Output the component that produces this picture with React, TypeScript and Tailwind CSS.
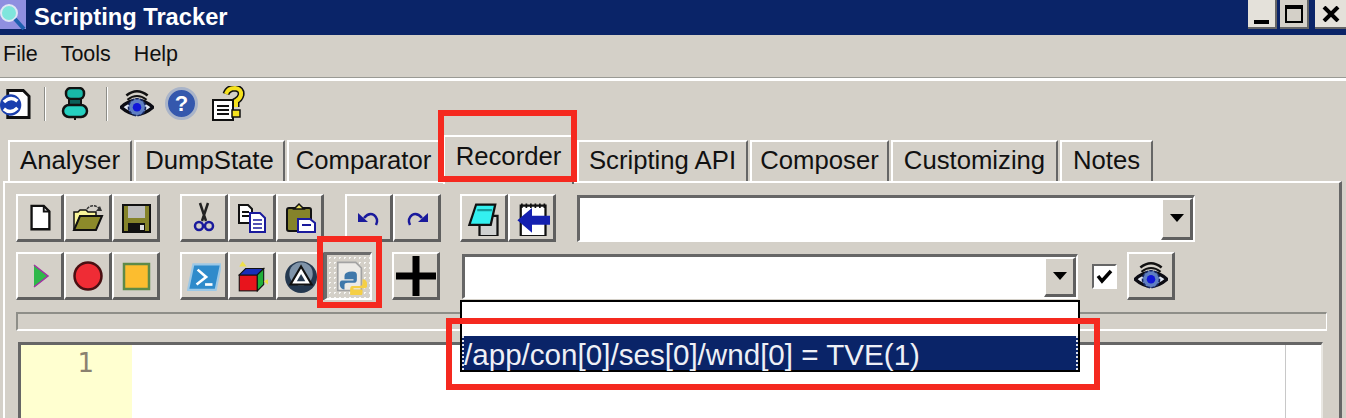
// Scripting Tracker window, recorder tab with the red callouts on top
import React from 'react';

const TABS = [
  { label: 'Analyser', w: 'w-[124px]' },
  { label: 'DumpState', w: 'w-[151px]' },
  { label: 'Comparator', w: 'w-[153px]' },
  { label: 'Recorder', w: 'w-[131px]', active: true },
  { label: 'Scripting API', w: 'w-[171px]' },
  { label: 'Composer', w: 'w-[139px]' },
  { label: 'Customizing', w: 'w-[167px]' },
  { label: 'Notes', w: 'w-[93px]' },
];

const Btn = ({ children, pressed }: { children: React.ReactNode; pressed?: boolean }) => (
  <div
    className={
      pressed
        ? 'w-[48px] h-[48px] flex items-center justify-center border-t-[3px] border-l-[3px] border-b-2 border-r-2 border-t-[#6b6b6b] border-l-[#6b6b6b] border-b-white border-r-white bg-[radial-gradient(#f8f8f6_1px,#d4d0c8_1px)] bg-[length:5px_5px]'
        : 'w-[48px] h-[48px] flex items-center justify-center border-t-2 border-l-2 border-b-[3px] border-r-[3px] border-t-white border-l-white border-b-[#5f5f5f] border-r-[#5f5f5f]'
    }
  >
    {children}
  </div>
);

const Svg = ({ children, size = 32 }: { children: React.ReactNode; size?: number }) => (
  <svg width={size} height={size} viewBox="0 0 32 32">
    {children}
  </svg>
);

const EyeIcon = ({ size = 34 }: { size?: number }) => (
  <Svg size={size}>
    <path d="M6 8 Q16 0 26 8" fill="none" stroke="#111" strokeWidth="2.5" />
    <path d="M7 12 Q16 5 25 12" fill="none" stroke="#111" strokeWidth="2" />
    <path d="M1 19 Q16 6 31 19 Q16 32 1 19Z" fill="#dfe6f2" stroke="#0c0c14" strokeWidth="3" />
    <circle cx="16" cy="19" r="8" fill="#5f7fc2" stroke="#16265f" strokeWidth="1.5" strokeDasharray="3 1.5" />
    <circle cx="16" cy="19" r="4" fill="#1016d8" />
  </Svg>
);

const Combo = ({ size }: { size: string }) => (
  <div className={`${size} flex border-t-[3px] border-l-[3px] border-b-2 border-r-2 border-t-[#666] border-l-[#666] border-b-white border-r-white bg-white`}>
    <div className="flex-1" />
    <div className="w-[32px] flex items-center justify-center bg-[#d4d0c8] border-t-2 border-l-2 border-b-[3px] border-r-[3px] border-t-white border-l-white border-b-[#5f5f5f] border-r-[#5f5f5f]">
      <svg width="14" height="8" viewBox="0 0 14 8">
        <path d="M0 0H14L7 8Z" fill="#000" />
      </svg>
    </div>
  </div>
);

export default function App() {
  return (
    <div className="relative w-[1346px] h-[418px] overflow-hidden bg-[#d4d0c8] flex flex-col font-['Liberation_Sans',Arial,sans-serif] text-[#111]">
      {/* title bar */}
      <div className="h-[35px] shrink-0 bg-[#0a2468] flex items-start">
        <svg width="28" height="32" viewBox="0 0 28 32" className="ml-[-1px]">
          <rect x="0" y="0" width="27" height="29" fill="#8f8fe0" />
          <circle cx="10" cy="13" r="8" fill="#7fe5dc" stroke="#dfe6f5" strokeWidth="2" />
          <path d="M16 19L25 29" stroke="#1d5fae" strokeWidth="4" />
        </svg>
        <span className="ml-[7px] mt-[6px] text-white font-bold text-[23.7px] leading-none">Scripting Tracker</span>
        <div className="ml-auto flex">
          <div className="w-[29px] h-[29px] bg-[#e4e1da] border-b-2 border-r-2 border-[#666] flex items-end justify-center pb-[3px]">
            <div className="w-[15px] h-[4px] bg-black" />
          </div>
          <div className="ml-[3px] w-[29px] h-[29px] bg-[#d4d0c8] border-b-2 border-r-2 border-[#666] flex items-center justify-center">
            <div className="w-[18px] h-[18px] border-2 border-t-[4px] border-black" />
          </div>
          <div className="ml-[6px] w-[31px] h-[29px] bg-[#e4e1da] border-b-2 border-[#666] flex items-center justify-center">
            <svg width="18" height="16" viewBox="0 0 18 16">
              <path d="M2 1L16 15M16 1L2 15" stroke="#000" strokeWidth="4" />
            </svg>
          </div>
        </div>
      </div>

      {/* menu */}
      <div className="h-[46px] shrink-0 flex items-center pl-[3px] pb-[5px] gap-[23px] text-[21.5px] border-b-[3px] border-b-white relative">
        <span>File</span>
        <span>Tools</span>
        <span>Help</span>
        <div className="absolute left-0 right-0 bottom-0 h-px bg-[#9a9a94]" />
      </div>

      {/* top toolbar */}
      <div className="h-[45px] shrink-0 flex items-center">
        <div className="w-[31px] overflow-hidden flex justify-end">
          <Svg size={34}>
            <path d="M8 2H24L30 8V30H8Z" fill="#fff" stroke="#111" strokeWidth="3" />
            <circle cx="11" cy="17" r="11" fill="#1a3fae" />
            <path d="M4 14Q11 7 18 13M18 20Q11 27 4 21" fill="none" stroke="#fff" strokeWidth="3.5" />
          </Svg>
        </div>
        <div className="ml-[13px] w-[2px] h-[34px] bg-[#8d8d88] border-r border-white" />
        <div className="ml-[15px]">
          <svg width="28" height="34" viewBox="0 0 28 34">
            <rect x="5" y="1" width="18" height="11" rx="5" fill="#18b8a8" stroke="#111" strokeWidth="2.5" />
            <rect x="8" y="12" width="12" height="6" fill="#0b5f59" stroke="#111" strokeWidth="2" />
            <rect x="2" y="18" width="24" height="12" rx="6" fill="#25d0c0" stroke="#111" strokeWidth="2.5" />
            <path d="M14 30V33" stroke="#111" strokeWidth="2" />
          </svg>
        </div>
        <div className="ml-[17px] w-[2px] h-[34px] bg-[#8d8d88] border-r border-white" />
        <div className="ml-[12px]">
          <EyeIcon />
        </div>
        <div className="ml-[11px] w-[33px] h-[33px] rounded-full bg-[#3558ad] border-[3px] border-[#a9b4c9] flex items-center justify-center text-white font-bold text-[22px] leading-none">
          ?
        </div>
        <div className="ml-[13px]">
          <svg width="34" height="36" viewBox="0 0 34 36">
            <path d="M2 14H22V34H2Z" fill="#fff" stroke="#111" strokeWidth="2" />
            <path d="M6 20H18M6 24H18M6 28H18" stroke="#111" strokeWidth="2" />
            <path d="M15 8Q17 2 24 2Q31 3 30 9Q29 13 25 15V21" fill="none" stroke="#111" strokeWidth="7" />
            <path d="M15 8Q17 2 24 2Q31 3 30 9Q29 13 25 15V21" fill="none" stroke="#f5e11e" strokeWidth="4" />
            <rect x="21" y="24" width="8" height="7" fill="#f5e11e" stroke="#111" strokeWidth="1.5" />
          </svg>
        </div>
      </div>

      {/* tabs */}
      <div className="h-[55px] shrink-0 flex items-end pl-[8px] gap-[2px] relative z-10">
        {TABS.map((t) =>
          t.active ? (
            <div key={t.label} className={`${t.w} h-[49px] mx-[1px] mb-[-3px] flex items-start pt-[5px] justify-center bg-[#d4d0c8] border-t-2 border-l-2 border-r-2 border-t-white border-l-white border-r-[#666] text-[25.7px] leading-[28px]`}>
              {t.label}
            </div>
          ) : (
            <div key={t.label} className={`${t.w} h-[41px] pb-[2px] flex items-center justify-center border-t-2 border-l-2 border-r-2 border-t-white border-l-white border-r-[#666] text-[25.7px] leading-none`}>
              {t.label}
            </div>
          )
        )}
      </div>

      {/* recorder panel */}
      <div className="flex-1 min-h-0 ml-[3px] mr-[4px] border-t-2 border-l-2 border-r-[3px] border-t-white border-l-white border-r-[#666] pl-[11px] pt-[11px] flex flex-col">
        <div className="flex h-[48px] items-center">
          <div className="flex w-[164px]">
            <Btn>
              <Svg size={30}>
                <path d="M7 3H20L26 9V28H7Z" fill="#fff" stroke="#111" strokeWidth="2.5" />
                <path d="M20 3V9H26" fill="none" stroke="#111" strokeWidth="2" />
              </Svg>
            </Btn>
            <Btn>
              <Svg>
                <path d="M2 27V10H6L8 8H14L16 10H24V14H8L3 27" fill="#f8f59a" stroke="#111" strokeWidth="1.5" />
                <path d="M2 28L8 14H30L24 28Z" fill="#8c8a2a" stroke="#111" strokeWidth="2" />
                <path d="M15 7Q20 1 27 6" fill="none" stroke="#333" strokeWidth="1.5" strokeDasharray="3 1" />
                <path d="M24 9L30 9L28 4Z" fill="#333" />
              </Svg>
            </Btn>
            <Btn>
              <Svg>
                <rect x="3" y="3" width="27" height="27" fill="#85832a" stroke="#111" strokeWidth="2" />
                <rect x="8" y="4" width="17" height="12" fill="#bdbdbd" />
                <rect x="8" y="21" width="17" height="9" fill="#111" />
                <rect x="20" y="23" width="4" height="5" fill="#ddd" />
              </Svg>
            </Btn>
          </div>
          <div className="flex w-[165px]">
            <Btn>
              <Svg>
                <path d="M12 1L18 19M20 1L14 19" stroke="#222" strokeWidth="2.5" />
                <circle cx="11" cy="24" r="4" fill="none" stroke="#1a1a9c" strokeWidth="2.5" />
                <circle cx="21" cy="24" r="4" fill="none" stroke="#1a1a9c" strokeWidth="2.5" />
              </Svg>
            </Btn>
            <Btn>
              <Svg>
                <path d="M3 3H12L16 7V21H3Z" fill="#fff" stroke="#111" strokeWidth="2" />
                <path d="M6 10H13M6 14H13" stroke="#111" strokeWidth="2" />
                <path d="M14 11H24L29 16V30H14Z" fill="#fff" stroke="#1a1a9c" strokeWidth="2" />
                <path d="M17 18H26M17 22H26M17 26H26" stroke="#1a1a9c" strokeWidth="1.5" />
              </Svg>
            </Btn>
            <Btn>
              <Svg>
                <rect x="3" y="6" width="24" height="23" rx="2" fill="#85832a" stroke="#111" strokeWidth="2" />
                <path d="M10 7L15 2L20 7Z" fill="#eadf5a" stroke="#111" strokeWidth="1.5" />
                <path d="M14 17H26L31 21V30H14Z" fill="#fff" stroke="#1a1a9c" strokeWidth="2" />
                <path d="M18 23H27" stroke="#1a1a9c" strokeWidth="2" />
              </Svg>
            </Btn>
          </div>
          <div className="flex w-[115px]">
            <Btn>
              <Svg>
                <path d="M11 16Q16 10 21 13Q26 17 23 23" fill="none" stroke="#1a1a9c" strokeWidth="2.5" />
                <path d="M5 11V20H15Z" fill="#1a1a9c" />
              </Svg>
            </Btn>
            <Btn>
              <Svg>
                <path d="M21 16Q16 10 11 13Q6 17 9 23" fill="none" stroke="#1a1a9c" strokeWidth="2.5" />
                <path d="M27 11V20H17Z" fill="#1a1a9c" />
              </Svg>
            </Btn>
          </div>
          <div className="flex w-[117px]">
            <Btn>
              <Svg size={36}>
                <path d="M12 14H28V32H12Z" fill="#cfd0cf" stroke="#111" strokeWidth="2" />
                <path d="M3 22L9 4H26L22 22Z" fill="#33f0f0" stroke="#111" strokeWidth="2" />
                <path d="M10 9H23" stroke="#159a9a" strokeWidth="2" />
              </Svg>
            </Btn>
            <Btn>
              <Svg size={36}>
                <path d="M6 5H28V32H6Z" fill="#fff" stroke="#111" strokeWidth="2" />
                <path d="M7 3V7M11 3V7M15 3V7M19 3V7M23 3V7M27 3V7" stroke="#111" strokeWidth="1.5" />
                <path d="M3 18L16 7V14H32V22H16V29Z" fill="#1420b0" />
              </Svg>
            </Btn>
          </div>
          <Combo size="w-[618px] h-[47px]" />
        </div>

        <div className="flex h-[48px] mt-[10px] items-center">
          <div className="flex w-[164px]">
            <Btn>
              <Svg>
                <path d="M10 5V27L24 16Z" fill="#2fb84a" />
                <path d="M10 27L24 16L10 5" fill="none" stroke="#a32fa3" strokeWidth="1.5" />
              </Svg>
            </Btn>
            <Btn>
              <Svg>
                <circle cx="16" cy="16" r="13.5" fill="#ef2c35" stroke="#4a1013" strokeWidth="2.5" />
              </Svg>
            </Btn>
            <Btn>
              <Svg>
                <rect x="4" y="4" width="25" height="25" fill="#fcbd2f" stroke="#5e8a48" strokeWidth="2.5" />
              </Svg>
            </Btn>
          </div>
          <div className="flex w-[144px]">
            <Btn>
              <Svg size={34}>
                <path d="M6 5H32L27 29H1Z" fill="#2f8bcb" stroke="#9cc8e6" strokeWidth="2" />
                <path d="M10 10L18 17L9 24" fill="none" stroke="#fff" strokeWidth="2.5" />
                <path d="M17 24H24" stroke="#fff" strokeWidth="2.5" />
              </Svg>
            </Btn>
            <Btn>
              <Svg size={34}>
                <path d="M7 2L11 7H4Z" fill="#eee04a" />
                <rect x="4" y="15" width="17" height="15" fill="#e8141c" stroke="#111" strokeWidth="1" />
                <path d="M4 15L10 9H27L21 15Z" fill="#1a2fb8" stroke="#111" strokeWidth="1" />
                <path d="M21 15L27 9V24L21 30Z" fill="#21b03a" stroke="#111" strokeWidth="1" />
                <path d="M27 21L31 19V24Z" fill="#eee04a" />
              </Svg>
            </Btn>
            <Btn>
              <Svg size={34}>
                <circle cx="17" cy="17" r="15" fill="#24384f" />
                <circle cx="17" cy="14" r="11" fill="#7f93a8" />
                <path d="M17 7L27 24H7Z" fill="#fff" stroke="#111" strokeWidth="2" />
                <path d="M17 14L21 21H13Z" fill="#24384f" />
              </Svg>
            </Btn>
          </div>
          <div className="flex w-[68px]">
            <Btn pressed>
              <Svg size={36}>
                <path d="M6 3H22L27 8V28H6Z" fill="#eceae6" stroke="#a3a3a3" strokeWidth="1.5" />
                <path d="M19 11Q12 11 12 15V18H20V19H10Q7 19 8 24Q9 27 12 27V23Q12 21 15 21H21Q23 21 23 18V14Q23 11 19 11Z" fill="#3f78aa" />
                <path d="M21 34Q28 34 28 30V27H20V26H30Q33 26 32 21Q31 18 28 18V22Q28 24 25 24H19Q17 24 17 27V31Q17 34 21 34Z" fill="#f5cf45" />
              </Svg>
            </Btn>
          </div>
          <div className="flex w-[70px]">
            <Btn>
              <svg width="40" height="40" viewBox="0 0 40 40">
                <path d="M20 0V40M0 20H40" stroke="#000" strokeWidth="7" />
              </svg>
            </Btn>
          </div>
          <Combo size="w-[616px] h-[45px]" />
          <div className="ml-[14px] w-[25px] h-[25px] bg-white border-2 border-[#666] border-b-white border-r-white flex items-center justify-center">
            <svg width="17" height="15" viewBox="0 0 17 15">
              <path d="M2 7L6 12L15 2" fill="none" stroke="#000" strokeWidth="3.5" />
            </svg>
          </div>
          <div className="ml-[10px]">
            <Btn>
              <EyeIcon />
            </Btn>
          </div>
        </div>

        {/* gripper bar */}
        <div className="mt-[12px] mr-[12px] h-[19px] shrink-0 border-t-2 border-l-2 border-b-2 border-r border-t-[#8e8e88] border-l-[#8e8e88] border-b-white border-r-white" />

        {/* editor */}
        <div className="mt-[11px] ml-[2px] mr-[16px] flex-1 min-h-0 flex bg-white border-t-[3px] border-l-[3px] border-t-[#666] border-l-[#666] border-r-2 border-r-[#e9e7e2]">
          <div className="w-[111px] bg-[#ffffd0] flex justify-end pr-[38px] text-[#8a8170] text-[26px] leading-none pt-[5px] font-['DejaVu_Sans',sans-serif]">
            1
          </div>
          <div className="flex-1 border-r border-r-[#c8c8c8] mr-[35px]" />
        </div>
      </div>

      {/* dropdown list of the second combo */}
      <div className="absolute left-[460px] top-[300px] w-[620px] h-[72px] bg-white border-2 border-black flex flex-col justify-end z-20">
        <div className="h-[34px] bg-[#0a2468] text-[#eef0f6] text-[29.6px] leading-[37px] whitespace-nowrap border-l-2 border-r-2 border-dotted border-l-[#dfe3ee] border-r-[#dfe3ee]">
          /app/con[0]/ses[0]/wnd[0] = TVE(1)
        </div>
      </div>

      {/* red callouts */}
      <div className="absolute left-[438px] top-[110px] w-[139px] h-[72px] border-[6px] border-[#f5291f] z-30" />
      <div className="absolute left-[317px] top-[236px] w-[65px] h-[72px] border-[6px] border-[#f5291f] z-30" />
      <div className="absolute left-[446px] top-[318px] w-[654px] h-[72px] border-[6px] border-[#f5291f] z-30" />
    </div>
  );
}
